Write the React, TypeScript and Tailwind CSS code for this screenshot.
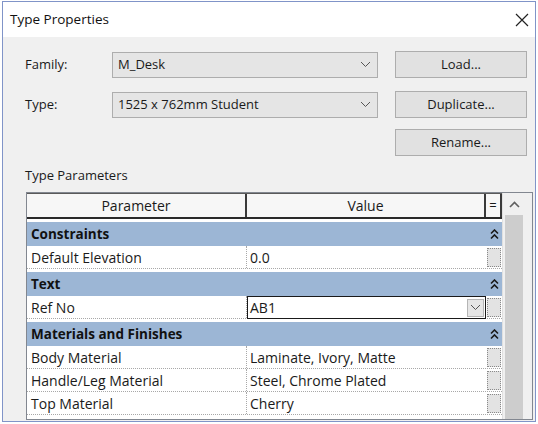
import React from "react";

function Chevron() {
  return (
    <svg width="11" height="7" viewBox="0 0 11 7" className="shrink-0">
      <path d="M1 1 L5.5 5.5 L10 1" fill="none" stroke="#555" strokeWidth="1" />
    </svg>
  );
}

function DoubleUp() {
  return (
    <svg width="9" height="11" viewBox="0 0 9 11">
      <path d="M1 4.5 L4.5 1 L8 4.5" fill="none" stroke="#1a1a1a" strokeWidth="1.6" />
      <path d="M1 9.5 L4.5 6 L8 9.5" fill="none" stroke="#1a1a1a" strokeWidth="1.6" />
    </svg>
  );
}

function Combo({ text }: { text: string }) {
  return (
    <div className="w-[266px] h-[26px] bg-[#e5e5e5] border border-[#adadad] flex items-center pl-[5px] pr-[6px] justify-between">
      <span className="text-[13px] text-[#1a1a1a]">{text}</span>
      <Chevron />
    </div>
  );
}

function Btn({ text }: { text: string }) {
  return (
    <div className="w-[132px] h-[27px] bg-[#e1e1e1] border border-[#adadad] flex items-center justify-center text-[13px] text-[#1a1a1a]">
      {text}
    </div>
  );
}

function Group({ title }: { title: string }) {
  return (
    <div className="mt-[3px] h-[24px] bg-[#9cb6d5] flex items-center">
      <div className="w-[459px] pl-[4px] font-bold text-[13.5px] text-[#111]">{title}</div>
      <div className="w-[16px] flex justify-center">
        <DoubleUp />
      </div>
    </div>
  );
}

function BoxBtn() {
  return (
    <div className="w-[16px] h-full flex items-center justify-center">
      <div className="w-[14px] h-[19px] bg-[#e3e3e3] border border-dotted border-[#8a8a8a]" />
    </div>
  );
}

function Row({ name, value }: { name: string; value: string }) {
  return (
    <div className="h-[23px] flex border-b border-dotted border-[#a8a8a8] bg-white">
      <div className="w-[220px] pl-[4px] flex items-center border-r border-dotted border-[#a8a8a8] text-[14px] text-[#1a1a1a]">
        {name}
      </div>
      <div className="w-[239px] pl-[3px] flex items-center text-[14px] text-[#1a1a1a]">{value}</div>
      <BoxBtn />
    </div>
  );
}

function RefRow() {
  return (
    <div className="h-[23px] flex border-b border-dotted border-[#a8a8a8] bg-white">
      <div className="w-[220px] pl-[4px] flex items-center border-r border-dotted border-[#a8a8a8] text-[14px] text-[#1a1a1a]">
        Ref No
      </div>
      <div className="w-[239px] h-[23px] border border-[#1a1a1a] flex items-center justify-between pl-[2px] pr-[1px]">
        <span className="text-[14px] text-[#1a1a1a]">AB1</span>
        <div className="w-[17px] h-[18px] bg-[#e6e6e6] border border-[#b5b5b5] flex items-center justify-center">
          <Chevron />
        </div>
      </div>
      <BoxBtn />
    </div>
  );
}

export default function App() {
  return (
    <div className="w-[538px] h-[424px] bg-white pt-[1px] pl-[2px] font-['Open_Sans',sans-serif]">
      <div className="w-[534px] h-[421px] border border-[#8094c8] flex flex-col">
        <div className="h-[35px] bg-white flex items-center justify-between pl-[7px] pr-[6px]">
          <span className="text-[13.5px] text-[#111]">Type Properties</span>
          <svg width="14" height="14" viewBox="0 0 14 14">
            <path d="M1 1 L13 13 M13 1 L1 13" stroke="#222" strokeWidth="1.2" />
          </svg>
        </div>
        <div className="flex-1 bg-[#f0f0f0] pt-[14px] flex flex-col">
          <div className="h-[27px] flex items-center">
            <div className="w-[109px] pl-[22px] text-[13px] text-[#1a1a1a]">Family:</div>
            <Combo text="M_Desk" />
            <div className="ml-[17px]">
              <Btn text="Load..." />
            </div>
          </div>
          <div className="mt-[13px] h-[27px] flex items-center">
            <div className="w-[109px] pl-[22px] text-[13px] text-[#1a1a1a]">Type:</div>
            <Combo text="1525 x 762mm Student" />
            <div className="ml-[17px]">
              <Btn text="Duplicate..." />
            </div>
          </div>
          <div className="mt-[11px] h-[27px] flex items-center pl-[392px]">
            <Btn text="Rename..." />
          </div>
          <div className="mt-[11px] h-[18px] pl-[22px] flex items-center text-[13px] text-[#1a1a1a]">
            Type Parameters
          </div>
          <div className="mt-[7px] ml-[23px] w-[507px] h-[228px] border border-[#828790] flex bg-white">
            <div className="w-[475px] flex flex-col">
              <div className="h-[26px] flex bg-[#f7f7f7] border-t border-[#5a5a5a] border-b-2 border-b-[#2a2a2a]">
                <div className="w-[220px] flex items-center justify-center border-r-2 border-[#3a3a3a] text-[14px] text-[#1a1a1a]">
                  Parameter
                </div>
                <div className="w-[239px] flex items-center justify-center border-r-2 border-[#3a3a3a] text-[14px] text-[#1a1a1a]">
                  Value
                </div>
                <div className="w-[16px] flex items-center justify-center border-r-2 border-[#3a3a3a] text-[13px] text-[#1a1a1a]">
                  =
                </div>
              </div>
              <Group title="Constraints" />
              <Row name="Default Elevation" value="0.0" />
              <Group title="Text" />
              <RefRow />
              <Group title="Materials and Finishes" />
              <Row name="Body Material" value="Laminate, Ivory, Matte" />
              <Row name="Handle/Leg Material" value="Steel, Chrome Plated" />
              <Row name="Top Material" value="Cherry" />
            </div>
            <div className="flex-1 bg-[#f0f0f0] flex flex-col pl-[2px] border-l border-[#e0e0e0]">
              <div className="h-[22px] flex items-center justify-center w-[18px]">
                <svg width="11" height="7" viewBox="0 0 11 7">
                  <path d="M1 6 L5.5 1.5 L10 6" fill="none" stroke="#606060" strokeWidth="1.6" />
                </svg>
              </div>
              <div className="flex-1 w-[18px] bg-[#cdcdcd]" />
            </div>
          </div>
        </div>
      </div>
    </div>
  );
}
